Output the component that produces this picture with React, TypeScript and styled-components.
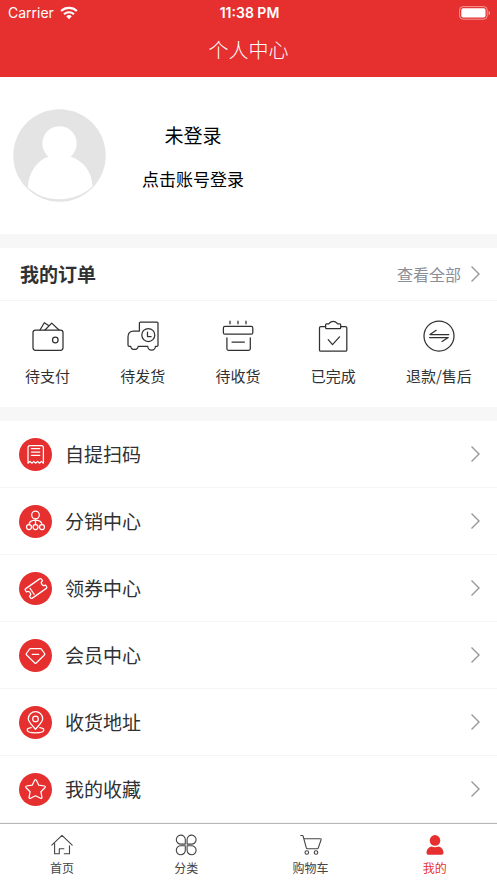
import React from "react";
import styled, { createGlobalStyle } from "styled-components";

const RED = "#e5302f";
const INK = "#303133";

const GlobalStyle = createGlobalStyle`
  *, *::before, *::after { box-sizing: border-box; }
  body {
    margin: 0;
    background: #fff;
    color: ${INK};
    font-family: "Noto Sans CJK SC", "Noto Sans", sans-serif;
  }
  h1, h2, p, ul { margin: 0; padding: 0; }
  ul { list-style: none; }
  a { color: inherit; text-decoration: none; }
  svg { display: block; flex: none; }
`;

const Page = styled.div`
  display: flex;
  flex-direction: column;
  min-height: 100vh;
`;

const Header = styled.header`
  background: ${RED};
  color: #fff;
`;

const StatusBar = styled.div`
  display: grid;
  grid-template-columns: 1fr auto 1fr;
  align-items: center;
  height: 25px;
  padding: 0 6px 0 8px;
  font-family: Inter, sans-serif;
  font-size: 14px;
`;

const Carrier = styled.div`
  display: flex;
  align-items: center;
  gap: 6px;
`;

const Clock = styled.time`
  font-weight: 600;
`;

const BatterySlot = styled.div`
  display: flex;
  justify-content: flex-end;
`;

const Title = styled.h1`
  height: 52px;
  font-size: 20px;
  font-weight: 300;
  line-height: 50px;
  text-align: center;
`;

const Profile = styled.section`
  display: flex;
  align-items: center;
  gap: 36px;
  height: 157px;
  padding: 0 13px;
  color: #000;
`;

const ProfileText = styled.div`
  display: flex;
  flex-direction: column;
  align-items: center;
  gap: 16px;
  padding-top: 2px;
`;

const UserName = styled.p`
  font-size: 19px;
  line-height: 28px;
`;

const LoginLink = styled.a`
  font-size: 17px;
  line-height: 28px;
`;

const Divider = styled.div`
  height: 14px;
  background: #f7f7f7;
`;

const OrdersHead = styled.div`
  display: flex;
  align-items: center;
  justify-content: space-between;
  height: 53px;
  padding: 0 16px 0 20px;
  border-bottom: 1px solid #f5f5f5;
`;

const OrdersTitle = styled.h2`
  font-size: 19px;
  font-weight: 700;
  line-height: 28px;
`;

const AllLink = styled.a`
  display: flex;
  align-items: center;
  gap: 9px;
  color: #8b8e98;
  font-size: 16px;
  line-height: 24px;
`;

const OrderList = styled.ul`
  display: flex;
  justify-content: space-around;
  height: 106px;
  padding-top: 19px;
`;

const OrderLink = styled.a`
  display: flex;
  flex-direction: column;
  align-items: center;
  gap: 12px;
  font-size: 15px;
  line-height: 24px;
`;

const MenuLink = styled.a`
  display: flex;
  align-items: center;
  gap: 13px;
  height: 67px;
  padding: 0 16px 0 19px;
  border-bottom: 1px solid #f5f5f5;
  font-size: 19px;
`;

const MenuLabel = styled.span`
  flex: 1;
  padding-bottom: 2px;
`;

const MenuIcon = styled.span`
  display: grid;
  place-items: center;
  width: 33px;
  height: 33px;
  border-radius: 50%;
  background: ${RED};
  color: #fff;
`;

const TabBar = styled.nav`
  position: sticky;
  bottom: 0;
  display: grid;
  grid-template-columns: repeat(4, 1fr);
  height: 60px;
  border-top: 1px solid #b8b8b8;
  background: #fff;
`;

const Tab = styled.a<{ $active?: boolean }>`
  display: flex;
  flex-direction: column;
  align-items: center;
  gap: 3px;
  padding-top: 10px;
  color: ${(p) => (p.$active ? RED : "#444")};
  font-size: 12px;
  line-height: 18px;
`;

type DrawingProps = { size: number; children: React.ReactNode; stroke?: number };

const Drawing = ({ size, children, stroke = 1.25 }: DrawingProps) => (
  <svg
    width={size}
    height={size}
    viewBox={`0 0 ${size} ${size}`}
    fill="none"
    stroke="currentColor"
    strokeWidth={stroke}
    strokeLinecap="round"
    strokeLinejoin="round"
    aria-hidden="true"
  >
    {children}
  </svg>
);

const Chevron = () => (
  <svg width="11" height="18" viewBox="0 0 11 18" fill="none" stroke="#96979a" strokeWidth="1.4" aria-hidden="true">
    <path d="M1.5 1.5 9 9l-7.5 7.5" />
  </svg>
);

const Wifi = () => (
  <svg width="18" height="14" viewBox="0 0 18 14" fill="none" stroke="#fff" strokeWidth="2.1" aria-hidden="true">
    <path d="M1.1 5.1a11.4 11.4 0 0 1 15.8 0M4 8.2a7.2 7.2 0 0 1 10 0" />
    <path d="M6.2 10.3a4 4 0 0 1 5.6 0L9 13.2z" fill="#fff" stroke="none" />
  </svg>
);

const Battery = () => (
  <svg width="32" height="14" viewBox="0 0 32 14" role="img" aria-label="电量">
    <rect x=".6" y=".6" width="27.6" height="12.6" rx="3.4" fill="none" stroke="#fff" strokeOpacity=".5" />
    <rect x="2.3" y="2.3" width="24.2" height="9.2" rx="1.8" fill="#fff" />
    <path d="M29.6 4.8c2 .8 2 3.6 0 4.4z" fill="#fff" fillOpacity=".55" />
  </svg>
);

const Avatar = () => (
  <svg width="93" height="93" viewBox="0 0 93 93" role="img" aria-label="头像">
    <circle cx="46.5" cy="46.5" r="46.2" fill="#e4e4e4" />
    <circle cx="46.5" cy="34.5" r="17.2" fill="#fff" />
    <path
      d="M36 47.5h21c13 4 22 15 22.5 29.8C71 85.5 59.5 90.3 46.5 90.3S23 86 14.8 78.3C15.5 63 24 51.5 36 47.5z"
      fill="#fff"
    />
  </svg>
);

const orders = [
  {
    label: "待支付",
    icon: (
      <>
        <rect x="1" y="10" width="30" height="20.3" rx="2.5" />
        <circle cx="23.3" cy="20" r="2.8" />
        <path d="M8 10l4.3-7.3 3.9 2.6M13 10l6.7-6.9L27 10" />
      </>
    ),
  },
  {
    label: "待发货",
    icon: (
      <>
        <path d="M3.7 26.3H2.3Q1 26.3 1 25v-8q0-6 5.5-6h5.9V3q0-1 1-1H30q1 0 1 1v22.3q0 1-1 1h-1.6M11.2 26.3h9.6M3.7 26.3a3.8 3.8 0 0 0 7.5 0M20.8 26.3a3.8 3.8 0 0 0 7.6 0" />
        <circle cx="21.3" cy="15" r="6.5" />
        <path d="M20.5 12v4.6h3.6" />
      </>
    ),
  },
  {
    label: "待收货",
    icon: (
      <>
        <path d="M8 1.2v2.6M16 1.2v2.6M24 1.2v2.6M4.9 17.8v11q0 1.5 1.5 1.5h20.4q1.5 0 1.5-1.5v-11M10 22h12.4" />
        <rect x="1.4" y="6.4" width="29.4" height="7.8" rx="1.5" />
      </>
    ),
  },
  {
    label: "已完成",
    icon: (
      <>
        <path d="M8.6 6.5H3.8q-1.3 0-1.3 1.3v22.1q0 1.3 1.3 1.3h24.7q1.3 0 1.3-1.3V7.8q0-1.3-1.3-1.3h-4.8" />
        <path d="M9.6 3.8h2.1c.9 0 .8-2.4 4.5-2.4s3.6 2.4 4.5 2.4h2q1 0 1 1v2.9q0 1-1 1H9.6q-1 0-1-1V4.8q0-1 1-1zM11.2 19.7l4.3 4.9 7-7.8" />
      </>
    ),
  },
  {
    label: "退款/售后",
    icon: (
      <>
        <circle cx="16" cy="16" r="15" />
        <path d="M25.8 14.5H7l6.2-4.2M6.5 17.5h18.8l-6.2 4.1" />
      </>
    ),
  },
];

const menu = [
  {
    label: "自提扫码",
    icon: (
      <>
        <path d="M9 25.2V9.5Q9 7.5 11 7.5h11.4q2 0 2 2v15.7l-2-1.8-1.9 1.8-1.9-1.8-1.9 1.8-1.9-1.8-1.9 1.8-1.9-1.8z" />
        <path d="M12.3 10.6h8.5M12.3 14h8.5M12.3 17.3h8.5" />
      </>
    ),
  },
  {
    label: "分销中心",
    icon: (
      <>
        <circle cx="16.5" cy="10" r="3.8" />
        <circle cx="10" cy="22" r="2.5" />
        <circle cx="16.5" cy="22" r="2.5" />
        <circle cx="23" cy="22" r="2.5" />
        <path d="M16.5 13.8v5.7M10 19.5q.5-4 6.5-4.3 6 .3 6.5 4.3" />
      </>
    ),
  },
  {
    label: "领券中心",
    icon: (
      <g transform="rotate(-35 17 16.5)">
        <path d="M8.5 10.7h17q1.3 0 1.3 1.3v1.9a2.6 2.6 0 0 0 0 5.2V21q0 1.3-1.3 1.3h-17q-1.3 0-1.3-1.3v-1.9a2.6 2.6 0 0 0 0-5.2V12q0-1.3 1.3-1.3z" />
        <path d="M12.2 13v1.8M12.2 16v1.2M12.2 18.4v1.8" />
      </g>
    ),
  },
  {
    label: "会员中心",
    icon: <path d="M11.6 9.7h9.8q.8 0 1.2.6l3 4.2q.5.8-.2 1.5l-8.2 8q-.7.7-1.4 0l-8.2-8q-.7-.7-.2-1.5l3-4.2q.4-.6 1.2-.6zM13.2 15.3h6.6" />,
  },
  {
    label: "收货地址",
    icon: (
      <>
        <path d="M16.5 23.3c-3.6-4.4-7.2-7.4-7.2-10.6a7.2 7 0 0 1 14.4 0c0 3.2-3.6 6.2-7.2 10.6z" />
        <circle cx="16.5" cy="12.9" r="2.8" />
        <path d="M12.2 21.7c-2.3.3-4 1.2-4 2.3 0 1.6 3.7 2.8 8.3 2.8s8.3-1.2 8.3-2.8c0-1.1-1.7-2-4-2.3" />
      </>
    ),
  },
  {
    label: "我的收藏",
    icon: (
      <path d="M15.6 7.3q.9-1.5 1.8 0l2.4 4.9 5.6.8q1.7.4.5 1.7l-4 4 1 5.5q.1 1.7-1.4 1.1l-5-2.6-5 2.6q-1.5.6-1.4-1.1l1-5.5-4-4q-1.2-1.3.5-1.7l5.6-.8z" />
    ),
  },
];

const tabs = [
  {
    label: "首页",
    icon: <path d="M.8 11.2 11 1.4l10.2 9.8M3.6 9.5v10.2h4.7v-5h4.6M18.5 11.8v7.9h-5.2" />,
  },
  {
    label: "分类",
    icon: (
      <path d="M10.3 10.1H6.1A4.5 4.5 0 1 1 10.3 5.6zM12.1 10.1h4.2a4.5 4.5 0 1 0-4.2-4.5zM10.3 11.8H6.1a4.5 4.5 0 1 0 4.2 4.5zM12.1 11.8h4.2a4.5 4.5 0 1 1-4.2 4.5z" />
    ),
  },
  {
    label: "购物车",
    icon: (
      <>
        <path d="M.8 1.5h1.6q.6 0 .8.8l3.1 11.6q.2.8 1 .8h10q.8 0 1-.8l2.8-8.2q.2-1-.8-1H4" />
        <circle cx="6.8" cy="18.5" r="1.8" />
        <circle cx="16" cy="18.5" r="1.8" />
      </>
    ),
  },
  {
    label: "我的",
    active: true,
    icon: (
      <g fill="currentColor" stroke="none">
        <circle cx="11" cy="6.4" r="5.3" />
        <path d="M7.2 12.6q3.8 1.5 7.6 0c3.3.9 4.7 3.5 4.7 6.4q0 1.8-1.8 1.8H4.3q-1.8 0-1.8-1.8c0-2.9 1.4-5.5 4.7-6.4z" />
      </g>
    ),
  },
];

export default function App() {
  return (
    <Page>
      <GlobalStyle />
      <Header>
        <StatusBar>
          <Carrier>
            Carrier
            <Wifi />
          </Carrier>
          <Clock>11:38 PM</Clock>
          <BatterySlot>
            <Battery />
          </BatterySlot>
        </StatusBar>
        <Title>个人中心</Title>
      </Header>
      <main>
        <Profile>
          <Avatar />
          <ProfileText>
            <UserName>未登录</UserName>
            <LoginLink href="#login">点击账号登录</LoginLink>
          </ProfileText>
        </Profile>
        <Divider />
        <section>
          <OrdersHead>
            <OrdersTitle>我的订单</OrdersTitle>
            <AllLink href="#orders">
              查看全部
              <Chevron />
            </AllLink>
          </OrdersHead>
          <OrderList>
            {orders.map((o) => (
              <li key={o.label}>
                <OrderLink href="#orders">
                  <Drawing size={32}>{o.icon}</Drawing>
                  {o.label}
                </OrderLink>
              </li>
            ))}
          </OrderList>
        </section>
        <Divider />
        <ul>
          {menu.map((m) => (
            <li key={m.label}>
              <MenuLink href="#menu">
                <MenuIcon>
                  <Drawing size={33}>{m.icon}</Drawing>
                </MenuIcon>
                <MenuLabel>{m.label}</MenuLabel>
                <Chevron />
              </MenuLink>
            </li>
          ))}
        </ul>
      </main>
      <TabBar>
        {tabs.map((t) => (
          <Tab key={t.label} href="#tab" $active={t.active} aria-current={t.active ? "page" : undefined}>
            <Drawing size={22} stroke={1.1}>
              {t.icon}
            </Drawing>
            {t.label}
          </Tab>
        ))}
      </TabBar>
    </Page>
  );
}
